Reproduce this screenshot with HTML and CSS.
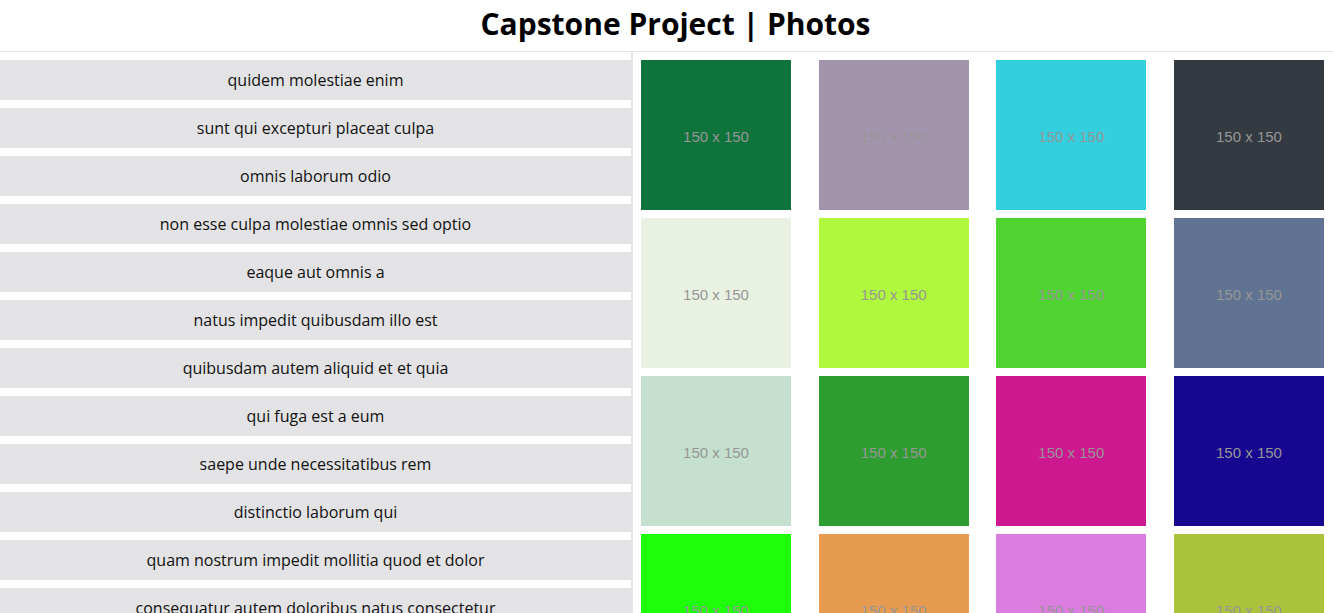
FILE: index.html
```html
<!DOCTYPE html>
<html lang="en">
<head>
<meta charset="utf-8">
<title>Capstone Project | Photos</title>
<link rel="stylesheet" href="styles.css">
</head>
<body>
<header class="header">
  <h1 class="title">Capstone Project | Photos</h1>
</header>
<main class="main">
  <section class="albums">
    <div class="album">quidem molestiae enim</div>
    <div class="album">sunt qui excepturi placeat culpa</div>
    <div class="album">omnis laborum odio</div>
    <div class="album">non esse culpa molestiae omnis sed optio</div>
    <div class="album">eaque aut omnis a</div>
    <div class="album">natus impedit quibusdam illo est</div>
    <div class="album">quibusdam autem aliquid et et quia</div>
    <div class="album">qui fuga est a eum</div>
    <div class="album">saepe unde necessitatibus rem</div>
    <div class="album">distinctio laborum qui</div>
    <div class="album">quam nostrum impedit mollitia quod et dolor</div>
    <div class="album">consequatur autem doloribus natus consectetur</div>
    <div class="album">ab rerum non rerum consequatur ut ea unde</div>
    <div class="album">ducimus molestias eos animi atque nihil</div>
  </section>
  <section class="photos">
    <div class="photo" style="background:#0f743c">150 x 150</div>
    <div class="photo" style="background:#a394ae">150 x 150</div>
    <div class="photo" style="background:#34cfdf">150 x 150</div>
    <div class="photo" style="background:#333a41">150 x 150</div>
    <div class="photo" style="background:#e9f1e2">150 x 150</div>
    <div class="photo" style="background:#b0f83d">150 x 150</div>
    <div class="photo" style="background:#4fd432">150 x 150</div>
    <div class="photo" style="background:#607393">150 x 150</div>
    <div class="photo" style="background:#c6e0cf">150 x 150</div>
    <div class="photo" style="background:#2e9d31">150 x 150</div>
    <div class="photo" style="background:#ce188f">150 x 150</div>
    <div class="photo" style="background:#170690">150 x 150</div>
    <div class="photo" style="background:#1efe08">150 x 150</div>
    <div class="photo" style="background:#e69b50">150 x 150</div>
    <div class="photo" style="background:#da7dde">150 x 150</div>
    <div class="photo" style="background:#abc33c">150 x 150</div>
  </section>
</main>
</body>
</html>
```
FILE: styles.css
```css
html, body {
  margin: 0;
  padding: 0;
  background: #ffffff;
  font-family: "Open Sans", "Noto Sans", sans-serif;
  color: #111111;
}

.header {
  height: 52px;
  box-sizing: border-box;
  padding: 0 0 4px 18px;
  border-bottom: 1px solid #e6e6e6;
  display: flex;
  align-items: center;
  justify-content: center;
}

.title {
  margin: 0;
  font-size: 30px;
  font-weight: 700;
  color: #000000;
  line-height: 1;
}

.main {
  display: flex;
  height: 561px;
  overflow: hidden;
}

.albums {
  flex: 1;
  display: flex;
  flex-direction: column;
  gap: 8px;
  padding-top: 8px;
}

.album {
  height: 40px;
  flex-shrink: 0;
  background: #e3e3e5;
  display: flex;
  align-items: center;
  justify-content: center;
  font-size: 16px;
  color: #111111;
}

.photos {
  width: 683px;
  flex-shrink: 0;
  border-left: 2px solid #e6e6e8;
  padding: 8px 9px 0 8px;
  display: flex;
  flex-wrap: wrap;
  justify-content: space-between;
  align-content: flex-start;
  row-gap: 8px;
}

.photo {
  width: 150px;
  height: 150px;
  box-sizing: border-box;
  padding-top: 2px;
  display: flex;
  align-items: center;
  justify-content: center;
  font-family: "Liberation Sans", Arial, sans-serif;
  font-size: 15px;
  color: #969696;
}
```
